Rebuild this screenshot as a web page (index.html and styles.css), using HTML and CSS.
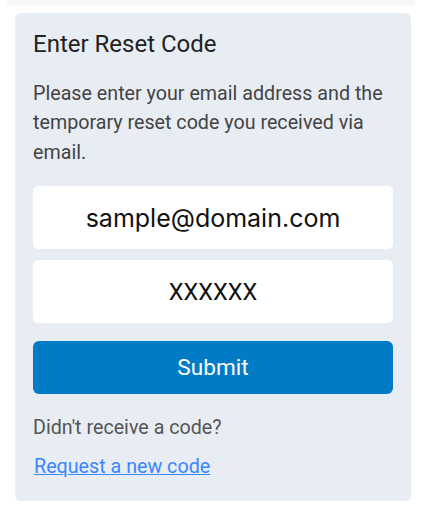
FILE: index.html
```html
<!DOCTYPE html>
<html>
<head>
<meta charset="utf-8">
<link rel="stylesheet" href="styles.css">
</head>
<body>
<div class="topbar"></div>
<div class="card">
  <h2 class="title">Enter Reset Code</h2>
  <p class="desc">Please enter your email address and the temporary reset code you received via email.</p>
  <div class="field email">sample@domain.com</div>
  <div class="field code">XXXXXX</div>
  <button class="submit">Submit</button>
  <p class="hint">Didn't receive a code?</p>
  <a class="link" href="#">Request a new code</a>
</div>
</body>
</html>
```

FILE: styles.css
```css
html, body {
  margin: 0;
  padding: 0;
  background: #ffffff;
}
body {
  font-family: Roboto, "Liberation Sans", sans-serif;
  width: 422px;
  height: 515px;
  overflow: hidden;
}
.topbar {
  height: 5px;
  margin: 0 7px;
  background: #f6f7f9;
}
.card {
  margin: 8px 11px 0 15px;
  background: #e8edf4;
  border-radius: 6px;
  padding: 17px 18px 0 18px;
  height: 488px;
  box-sizing: border-box;
  display: flex;
  flex-direction: column;
}
.title {
  margin: 0;
  font-size: 24px;
  font-weight: 400;
  color: #222;
  line-height: 28px;
}
.desc {
  margin: 20.5px 0 0 0;
  font-size: 19.7px;
  line-height: 29.5px;
  color: #444;
}
.field {
  margin-top: 19px;
  height: 63px;
  background: #fff;
  border-radius: 5px;
  display: flex;
  align-items: center;
  justify-content: center;
  font-size: 25px;
  color: #111;
}
.field.email {
  font-family: Inter, "Open Sans", sans-serif;
}
.field.code {
  margin-top: 11px;
  font-family: Roboto, sans-serif;
  font-size: 23.5px;
}
.submit {
  margin-top: 18px;
  height: 53px;
  border: none;
  border-radius: 6px;
  background: #027bc7;
  color: #fff;
  font-family: Roboto, sans-serif;
  font-size: 22.6px;
  padding: 0;
}
.hint {
  margin: 21px 0 0 0;
  font-size: 19.7px;
  line-height: 26px;
  color: #555;
}
.link {
  margin-top: 13px;
  font-size: 19.7px;
  line-height: 26px;
  color: #3a86ff;
  align-self: flex-start;
  padding-left: 1px;
}
```
